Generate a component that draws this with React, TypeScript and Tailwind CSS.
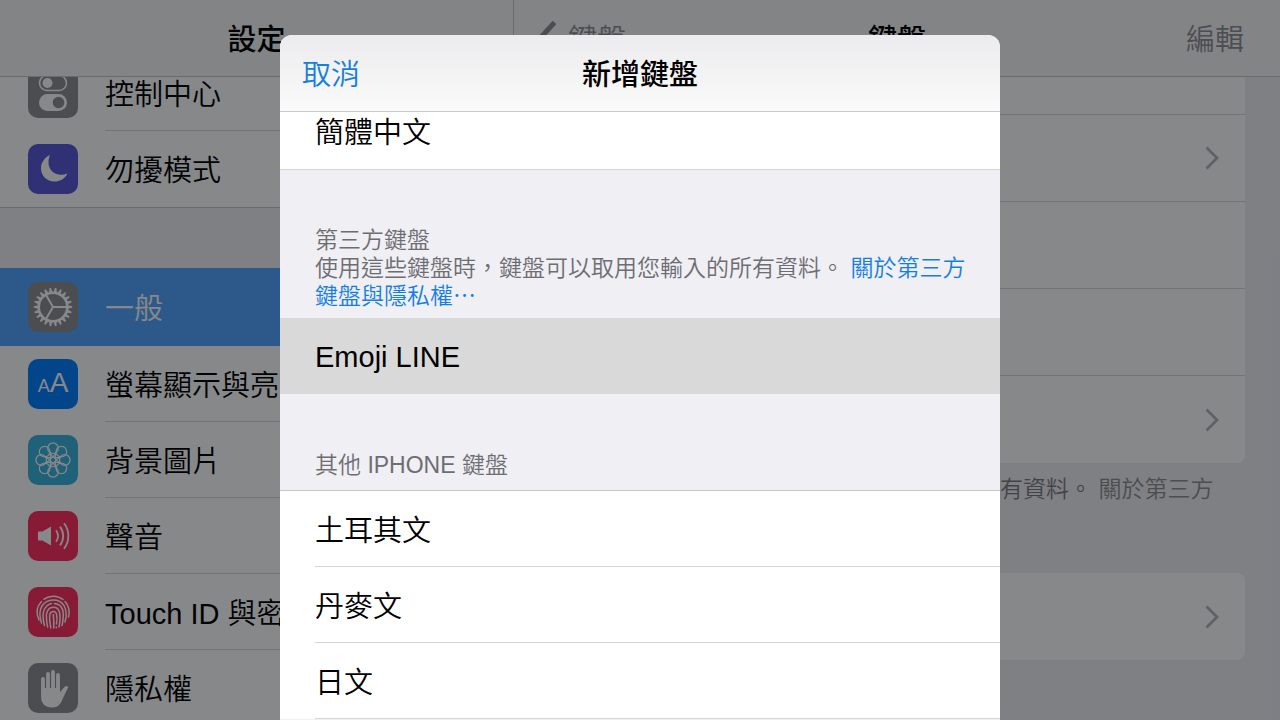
import type { ReactNode } from 'react'

interface MenuItem {
  id: string
  label: string
  color: string
  icon: ReactNode
}

const petals = [0, 45, 90, 135, 180, 225, 270, 315]
const teeth = Array.from({ length: 22 }, (_, i) => (i * 360) / 22)

const ControlIcon = () => (
  <svg viewBox="0 0 50 50" className="size-full" aria-hidden="true">
    <rect x="11.5" y="7.5" width="27" height="15" rx="7.5" fill="none" stroke="#fff" strokeWidth="1.6" />
    <circle cx="19.5" cy="15" r="5" fill="#fff" />
    <rect x="11" y="26" width="28" height="17" rx="8.5" fill="#fff" />
    <circle cx="30.5" cy="34.5" r="5.8" fill="#8e8e93" />
  </svg>
)

const MoonIcon = () => (
  <svg viewBox="0 0 50 50" className="size-full" aria-hidden="true">
    <path d="M22 11C16.500 13.500 13 18.500 13 24.200C13 31.800 18.800 37.500 26.400 37.500C32.300 37.500 37.200 34.500 39.500 29.200C37.200 30.300 35.200 30.700 33 30.700C25.800 30.700 20.500 25.500 20.500 18.500C20.500 15.700 21 13.300 22 11Z" fill="#fff" />
  </svg>
)

const GearIcon = () => (
  <svg viewBox="0 0 50 50" className="size-full" fill="none" stroke="#fff" aria-hidden="true">
    <circle cx="25" cy="25" r="14.3" strokeWidth="2.6" />
    {teeth.map((angle) => (
      <path key={angle} d="M39.500 23.300L44.200 24.200V25.800L39.500 26.700Z" fill="#fff" stroke="none" transform={`rotate(${angle} 25 25)`} />
    ))}
    {[0, 120, 240].map((angle) => (
      <path key={angle} d="M25 25H39" strokeWidth="2" transform={`rotate(${angle} 25 25)`} />
    ))}
  </svg>
)

const DisplayIcon = () => (
  <span className="flex size-full items-baseline justify-center pt-2 leading-8 text-white" aria-hidden="true">
    <span className="text-[18px]">A</span>
    <span className="text-[28px]">A</span>
  </span>
)

const FlowerIcon = () => (
  <svg viewBox="0 0 50 50" className="size-full" fill="none" stroke="#fff" strokeWidth="1.2" aria-hidden="true">
    <circle cx="25" cy="25" r="2.800" />
    {petals.map((angle) => (
      <g key={angle} transform={`rotate(${angle} 25 25)`}>
        <circle cx="25" cy="13.2" r="5.3" />
        <path d="M22 17.500L25 22.200L28 17.500" />
      </g>
    ))}
  </svg>
)

const SoundIcon = () => (
  <svg viewBox="0 0 50 50" className="size-full" aria-hidden="true">
    <path d="M10 20.500H14.500L23 15.500V34.500L14.500 29.500H10Z" fill="#fff" />
    <g fill="none" stroke="#fff" strokeWidth="1.8">
      <path d="M28 19.200A10 10 0 0 1 28 30.800" />
      <path d="M32 15.600A15.500 15.500 0 0 1 32 34.400" />
      <path d="M36 12.200A21 21 0 0 1 36 37.800" />
    </g>
  </svg>
)

const TouchIcon = () => (
  <svg viewBox="0 0 50 50" className="size-full" fill="none" stroke="#fff" strokeWidth="1.5" strokeLinecap="round" aria-hidden="true">
    <path d="M16 12.200A15.800 15.800 0 0 1 35 12.500" />
    <path d="M11 33C8 26 9 19 13.500 14.500" />
    <path d="M37 14.500C41 18.500 42 25 40.500 30" />
    <path d="M13.500 36C11.500 30 11 24 14 19C19 11 31 11 36 18.500C39 24 38.500 30 37 35" />
    <path d="M16.500 38.500C15 33 14 27 16.500 22C18.500 18.500 21 17 23.500 16.500" />
    <path d="M26.500 16.500C31 17 34 20 35 24C35.800 29 35 34 34 38.500" />
    <path d="M19.700 40C18.500 34 17.500 29 19 25C21.500 18.500 29.500 18.500 31.500 25C32.500 30 32 35 31 40" />
    <path d="M22.800 41C22.300 36 20.800 31 22 27C23 23.500 27.500 23.500 28.500 27C29.500 31 29 34 28.500 37" />
    <path d="M25.300 27.500C25.800 32 26 36 25.800 41M28.300 40V40.800" />
  </svg>
)

const HandIcon = () => (
  <svg viewBox="0 0 50 50" className="size-full" aria-hidden="true">
    <g fill="none" stroke="#fff" strokeWidth="3.8" strokeLinecap="round">
      <path d="M15 16V30M20 11V28M25 9V28M30 12V28" />
    </g>
    <path d="M13.100 25H31.900V29.500C33.800 27.500 35 24.800 37 23.600C38.500 22.800 40.500 23.300 40.200 24.400C38.500 27.500 36.800 31.500 34.600 36C32.500 41.500 30 44.500 24 44.500C17 44.500 13.100 40.500 13.100 33.500Z" fill="#fff" />
  </svg>
)

const topItems: MenuItem[] = [
  { id: 'control', label: '控制中心', color: 'bg-[#8e8e93]', icon: <ControlIcon /> },
  { id: 'dnd', label: '勿擾模式', color: 'bg-[#5856d6]', icon: <MoonIcon /> },
]

const mainItems: MenuItem[] = [
  { id: 'general', label: '一般', color: 'bg-[#8e8e93]', icon: <GearIcon /> },
  { id: 'display', label: '螢幕顯示與亮度', color: 'bg-[#007fff]', icon: <DisplayIcon /> },
  { id: 'wallpaper', label: '背景圖片', color: 'bg-[#36b4dc]', icon: <FlowerIcon /> },
  { id: 'sound', label: '聲音', color: 'bg-[#ff2d5b]', icon: <SoundIcon /> },
  { id: 'touch', label: 'Touch ID 與密碼', color: 'bg-[#ff2d5b]', icon: <TouchIcon /> },
  { id: 'privacy', label: '隱私權', color: 'bg-[#8e8e93]', icon: <HandIcon /> },
]

const keyboardRows = [
  { id: 'row-1', chevron: false },
  { id: 'row-2', chevron: true },
  { id: 'row-3', chevron: false },
  { id: 'row-4', chevron: false },
  { id: 'row-5', chevron: true },
]

const otherKeyboards = ['土耳其文', '丹麥文', '日文']

function SidebarRow({ item, selected, last }: { item: MenuItem; selected?: boolean; last?: boolean }) {
  return (
    <li className={selected ? 'bg-[#51a5ff]' : 'bg-white'}>
      <button type="button" className={`flex w-full items-center pl-7 text-left ${selected ? 'h-[78px] text-white' : 'h-[76px]'}`}>
        <span className={`size-[50px] shrink-0 overflow-hidden rounded-[10px] ${item.color}`}>{item.icon}</span>
        <span className={`ml-[27px] flex h-full flex-1 items-center pt-1 whitespace-nowrap ${selected || last ? '' : 'border-b border-[#d8d8dd]'}`}>
          {item.label}
        </span>
      </button>
    </li>
  )
}

function Chevron() {
  return (
    <svg viewBox="0 0 14 24" className="h-6 w-3.5" fill="none" stroke="#b4b4ba" strokeWidth="2.8" aria-hidden="true">
      <path d="M1.500 1.500L12 12L1.500 22.500" />
    </svg>
  )
}

function ThirdPartyNote({ linkClass }: { linkClass: string }) {
  return (
    <p>
      使用這些鍵盤時，鍵盤可以取用您輸入的所有資料。{' '}
      <a href="#privacy" className={linkClass}>關於第三方鍵盤與隱私權⋯</a>
    </p>
  )
}

export default function App() {
  return (
    <div
      lang="zh-Hant"
      className="relative h-screen overflow-hidden bg-[#efeff4] text-[29px] leading-10 font-[350] text-black [font-family:'Liberation_Sans','Noto_Sans_CJK_TC',sans-serif]"
    >
      <div className="flex h-full">
        {/* Settings sidebar */}
        <aside className="flex w-[514px] shrink-0 flex-col border-r border-[#c8c7cc]">
          <header className="z-10 flex h-[77px] shrink-0 items-center justify-center border-b border-[#c8c7cc] bg-[#f7f7f8] pt-1">
            <h1 className="font-medium">設定</h1>
          </header>
          <nav className="min-h-0 flex-1 overflow-hidden">
            <ul className="-mt-[22px] border-b border-[#c8c7cc]">
              {topItems.map((item, i) => (
                <SidebarRow key={item.id} item={item} last={i === topItems.length - 1} />
              ))}
            </ul>
            <ul className="mt-[60px]">
              {mainItems.map((item) => (
                <SidebarRow key={item.id} item={item} selected={item.id === 'general'} />
              ))}
            </ul>
          </nav>
        </aside>

        {/* Keyboard settings */}
        <main className="flex min-w-0 flex-1 flex-col">
          <header className="z-10 grid h-[77px] shrink-0 grid-cols-3 items-center border-b border-[#c8c7cc] bg-[#f7f7f8] px-9 pt-1">
            <button type="button" className="-ml-3.5 flex items-center gap-3 text-[#8e8e93]">
              <svg viewBox="0 0 20 38" className="h-[38px] w-5" fill="none" stroke="currentColor" strokeWidth="5" aria-hidden="true">
                <path d="M18.500 1.500L2.500 19L18.500 36.500" />
              </svg>
              鍵盤
            </button>
            <h2 className="text-center font-medium">鍵盤</h2>
            <button type="button" className="justify-self-end text-[#8e8e93]">編輯</button>
          </header>
          <div className="min-h-0 flex-1 overflow-hidden px-[35px]">
            <ul className="-mt-[49px] overflow-hidden rounded-b-lg bg-white">
              {keyboardRows.map((row) => (
                <li key={row.id} className="flex h-[87px] items-center justify-end border-b border-[#d8d8dd] pr-[26px] last:border-b-0">
                  {row.chevron && <Chevron />}
                </li>
              ))}
            </ul>
            <div className="h-[110px] pt-3 pr-6 pl-[14px] text-[23px] leading-7 text-[#7c7c82]">
              <ThirdPartyNote linkClass="text-[#8e8e93]" />
            </div>
            <ul className="rounded-lg bg-white">
              <li className="flex h-[87px] items-center justify-end pr-[26px]">
                <Chevron />
              </li>
            </ul>
          </div>
        </main>
      </div>

      {/* Add keyboard sheet */}
      <div className="absolute inset-0 z-20 flex justify-center bg-[#04060a]/48 pt-[35px]">
        <section role="dialog" aria-label="新增鍵盤" className="flex w-full max-w-[720px] flex-col overflow-hidden rounded-t-xl bg-[#efeff4]">
          <header className="z-10 grid h-[77px] shrink-0 grid-cols-3 items-center border-b border-[#c8c7cc] bg-linear-to-b from-[#ececee] to-[#fafafa] px-[22px] pt-1">
            <button type="button" className="justify-self-start text-[#157edf]">取消</button>
            <h2 className="text-center font-medium">新增鍵盤</h2>
          </header>
          <div className="min-h-0 flex-1 overflow-hidden">
            <button type="button" className="-mt-[19px] flex h-[77px] w-full items-center border-b border-[#d5d5d9] bg-white pt-1 pl-[35px] text-left">
              簡體中文
            </button>
            <div className="h-[148px] pt-14 pr-8 pl-[35px] text-[23px] leading-7 text-[#6d6d72]">
              <h3>第三方鍵盤</h3>
              <ThirdPartyNote linkClass="text-[#157edf]" />
            </div>
            <button type="button" className="flex h-[76px] w-full items-center bg-[#d9d9d9] pt-0.5 pl-[35px] text-left">
              Emoji LINE
            </button>
            <h3 className="flex h-[97px] items-end border-b border-[#c8c7cc] pb-[11px] pl-[35px] text-[23px] leading-7 text-[#6d6d72]">
              其他 IPHONE 鍵盤
            </h3>
            <ul className="bg-white pl-[35px]">
              {otherKeyboards.map((name) => (
                <li key={name} className="border-b border-[#d5d5d9]">
                  <button type="button" className="flex h-[75px] w-full items-center pt-1 text-left">{name}</button>
                </li>
              ))}
            </ul>
          </div>
        </section>
      </div>
    </div>
  )
}
